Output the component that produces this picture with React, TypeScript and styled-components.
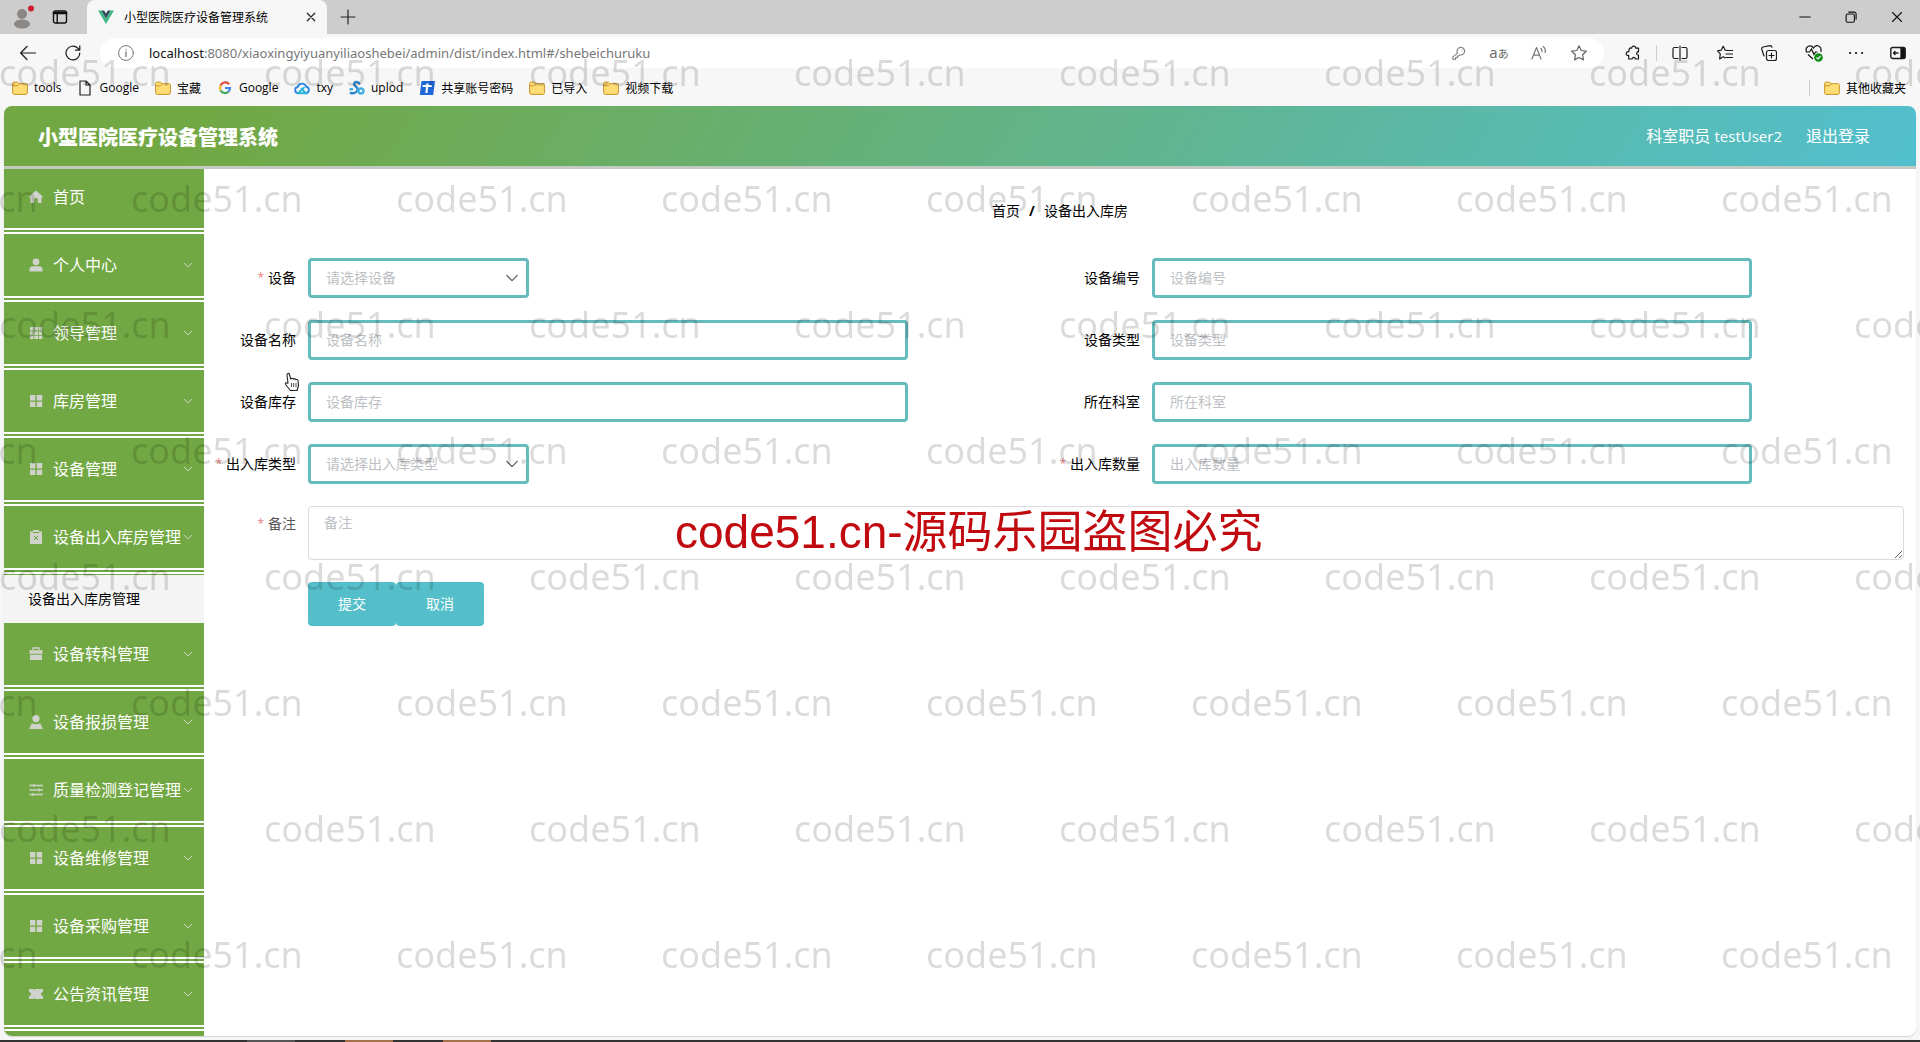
import React from 'react';
import styled, { createGlobalStyle } from 'styled-components';

const GlobalStyle = createGlobalStyle`
  *, *::before, *::after { box-sizing: border-box; }
  body {
    margin: 0;
    background: #f6f6f6;
    font-family: "Open Sans", "Noto Sans", "Noto Sans CJK SC", sans-serif;
    font-size: 14px;
    color: #000;
  }
  button, input, select, textarea { font: inherit; }
  a { color: inherit; text-decoration: none; }
`;

const green = '#72a843';
const teal = '#54bfca';
const fieldBorder = '#66bbbd';

/* ---------- browser frame ---------- */

const Window = styled.div`
  display: flex;
  flex-direction: column;
  min-height: 100vh;
  overflow: hidden;
`;

const TabStrip = styled.div`
  display: flex;
  align-items: center;
  height: 34px;
  background: #cdcdcd;
`;

const StripButton = styled.button<{ $w: number }>`
  display: grid;
  place-items: center;
  width: ${(p) => p.$w}px;
  height: 34px;
  padding: 0;
  border: 0;
  background: none;
`;

const StripStart = styled.div`
  display: flex;
  padding: 0 8px 0 2px;
`;

const Tab = styled.div`
  display: flex;
  align-items: center;
  gap: 10px;
  width: 240px;
  height: 34px;
  padding: 0 0 0 11px;
  border-radius: 8px 8px 0 0;
  background: #f7f7f7;
  font-size: 12px;
`;

const TabTitle = styled.span`
  flex: 1;
  white-space: nowrap;
`;

const WindowButtons = styled.div`
  display: flex;
  margin-left: auto;
`;

const Toolbar = styled.div`
  display: flex;
  align-items: center;
  height: 38px;
  background: #f7f7f7;
`;

const ToolButton = styled.button<{ $w: number }>`
  display: grid;
  place-items: center;
  width: ${(p) => p.$w}px;
  height: 30px;
  padding: 0;
  border: 0;
  background: none;
  color: #1b1b1b;
`;

const TranslateMark = styled.span`
  color: #666;
  font-size: 15px;
  line-height: 16px;

  small { font-size: 11px; }
`;

const NavButtons = styled.div`
  display: flex;
  padding: 0 6px 0 5px;
`;

const AddressBar = styled.div`
  display: flex;
  flex: 1;
  align-items: center;
  height: 30px;
  padding: 0 5px 0 18px;
  border-radius: 15px;
  background: #fff;
  color: #777;
`;

const Url = styled.span`
  flex: 1;
  padding-left: 15px;
  font-family: "Noto Sans", "Open Sans", sans-serif;
  font-size: 13px;
  white-space: nowrap;

  b { font-weight: 400; color: #111; }
`;

const Divider = styled.span`
  width: 1px;
  height: 16px;
  background: #cfcfcf;
`;

const ToolEnd = styled.div`
  display: flex;
  align-items: center;
  padding-left: 6px;
`;

const Bookmarks = styled.nav`
  display: flex;
  align-items: center;
  gap: 16px;
  height: 34px;
  padding: 0 14px 3px 12px;
  background: #f7f7f7;
  font-size: 12px;
  white-space: nowrap;
`;

const Bookmark = styled.a`
  display: flex;
  align-items: center;
  gap: 6px;
`;

const BookmarkEnd = styled.div`
  display: flex;
  align-items: center;
  gap: 14px;
  margin-left: auto;
`;

/* ---------- application ---------- */

const Page = styled.div`
  display: flex;
  flex: 1;
  flex-direction: column;
  margin: 0 4px 4px;
  overflow: hidden;
  border-radius: 8px;
  background: #fff;
  box-shadow: 0 1px 1px #d4d4d4;
`;

const Header = styled.header`
  display: flex;
  z-index: 1;
  align-items: center;
  justify-content: space-between;
  height: 60px;
  padding: 0 46px 0 34px;
  background: linear-gradient(120deg, ${green} 10%, #52bfce 100%);
  box-shadow: 0 3px 0 #c2cac2;
  color: #fff;
`;

const Title = styled.h1`
  margin: 0;
  font-size: 20px;
  font-weight: 900;
`;

const Account = styled.div`
  display: flex;
  align-items: center;
  gap: 24px;
  padding-bottom: 2px;
  font-size: 16px;
`;

const UserName = styled.span`
  font-size: 15px;
`;

const Body = styled.div`
  display: flex;
  flex: 1;
`;

const Sidebar = styled.nav`
  flex: none;
  width: 200px;
  background: ${green};
`;

const MenuItem = styled.a`
  display: flex;
  align-items: center;
  height: 68px;
  padding: 0 11px 0 24px;
  border-bottom: 6px double #fff;
  background: ${green};
  color: #fff;
  font-size: 16px;
  white-space: nowrap;
`;

const MenuText = styled.span`
  flex: 1;
  padding: 0 0 2px 9px;
`;

const SubItem = styled.a`
  display: flex;
  align-items: center;
  height: 49px;
  padding: 0 0 2px 24px;
  border-top: 1px solid ${green};
  background: #f4f4f4;
`;

const Main = styled.main`
  flex: 1;
  min-width: 0;
  padding: 32px 12px;
`;

const Breadcrumb = styled.div`
  display: flex;
  justify-content: center;
  gap: 9px;
  height: 60px;
  line-height: 26px;
`;

const Form = styled.form`
  display: grid;
  grid-template-columns: 1fr 1fr;
  row-gap: 22px;
`;

const Field = styled.div<{ $wide?: boolean }>`
  display: flex;
  grid-column: ${(p) => (p.$wide ? '1 / -1' : 'auto')};
`;

const Label = styled.label<{ $muted?: boolean }>`
  display: flex;
  flex: none;
  justify-content: flex-end;
  gap: 4px;
  width: 92px;
  padding-right: 12px;
  color: ${(p) => (p.$muted ? '#555' : '#000')};
  line-height: ${(p) => (p.$muted ? 36 : 39)}px;
  white-space: nowrap;
`;

const Required = styled.span`
  color: #e98080;
  font-size: 12px;
`;

const TextInput = styled.input`
  width: 600px;
  max-width: 80%;
  height: 40px;
  padding: 0 15px 2px;
  border: 3px solid ${fieldBorder};
  border-radius: 4px;
  outline: 0;
  background: #fff;

  &::placeholder { color: #bdbfc4; opacity: 1; }
`;

const SelectBox = styled.div`
  display: grid;
  width: 221px;
  align-items: center;

  > * { grid-area: 1 / 1; }
  > svg { justify-self: end; margin-right: 10px; pointer-events: none; }
`;

const Select = styled.select`
  width: 100%;
  height: 40px;
  padding: 0 15px 2px;
  border: 3px solid ${fieldBorder};
  border-radius: 4px;
  outline: 0;
  appearance: none;
  background: #fff;
  color: #bdbfc4;
`;

const TextArea = styled.textarea`
  flex: 1;
  height: 54px;
  padding: 5px 15px;
  border: 1px solid #d9dadd;
  border-radius: 4px;
  line-height: 22px;
  resize: vertical;

  &::placeholder { color: #bdbfc4; opacity: 1; }
`;

const Actions = styled.div`
  display: flex;
  grid-column: 1 / -1;
  padding-left: 92px;
`;

const ActionButton = styled.button`
  width: 88px;
  height: 44px;
  padding: 0 0 2px;
  border: 0;
  border-radius: 4px;
  background: ${teal};
  color: #fff;
`;

/* ---------- desktop strip and overlays ---------- */

const Taskbar = styled.div`
  display: flex;
  gap: 50px;
  height: 2px;
  padding-left: 247px;
  background: #333;
`;

const TaskMark = styled.span<{ $c: string }>`
  width: 48px;
  background: ${(p) => p.$c};
`;

const Overlay = styled.div`
  position: fixed;
  inset: 0;
  z-index: 5;
  overflow: hidden;
  padding-top: 10px;
  pointer-events: none;
`;

const MarkRow = styled.div<{ $shift: boolean }>`
  display: flex;
  margin-left: ${(p) => (p.$shift ? -134 : -1)}px;
  color: rgba(0, 0, 0, 0.14);
  font-family: "Noto Sans", "Open Sans", sans-serif;
  font-size: 36px;
  line-height: 126px;

  span { flex: none; width: 265px; }
`;

const Notice = styled.div`
  position: fixed;
  top: 500px;
  left: 675px;
  z-index: 6;
  color: #c00a0f;
  font-family: "Liberation Sans", "Noto Sans CJK SC", sans-serif;
  font-size: 45px;
  line-height: 64px;
  white-space: nowrap;
  pointer-events: none;
`;

const NoticeSite = styled.span`
  font-size: 46px;
`;

const Pointer = styled.svg`
  position: fixed;
  top: 372px;
  left: 284px;
  z-index: 7;
  pointer-events: none;
`;

/* ---------- icons ---------- */

const Line = ({ size = 16, children, w = 1.2, color = 'currentColor' }: any) => (
  <svg width={size} height={size} viewBox="0 0 16 16" fill="none" stroke={color} strokeWidth={w} strokeLinecap="round" strokeLinejoin="round">
    {children}
  </svg>
);

const Folder = () => (
  <svg width="16" height="16" viewBox="0 0 16 16">
    <path d="M.6 3.6c0-.9.6-1.5 1.5-1.5h3.3l1.6 1.6h6.9c.9 0 1.5.6 1.5 1.5v7.7c0 .9-.6 1.5-1.5 1.5H2.1c-.9 0-1.5-.6-1.5-1.5z" fill="#ffdd76" stroke="#c8942a" />
    <path d="M.8 5.8h4.6L7 4" fill="none" stroke="#c8942a" />
  </svg>
);

const FileIcon = () => (
  <Line color="#222"><path d="M3 1h6l4 4v10H3zM9 1v4h4" /></Line>
);

const GoogleIcon = () => (
  <svg width="16" height="16" viewBox="0 0 16 16" fill="none" strokeWidth="2.2">
    <path d="M12.1 4.2A5 5 0 0 0 3.6 5.6" stroke="#e2493b" />
    <path d="M3.6 5.6a5 5 0 0 0 0 4.8" stroke="#f3b626" />
    <path d="M3.6 10.4a5 5 0 0 0 7.8 1.3" stroke="#3aa757" />
    <path d="M11.4 11.7A5 5 0 0 0 13 8H8" stroke="#4383ee" />
  </svg>
);

const CloudIcon = () => (
  <svg width="16" height="16" viewBox="0 0 16 16" fill="none" strokeWidth="1.9" strokeLinecap="round">
    <path d="M4 13.2a3.2 3.2 0 0 1-.3-6.3 4.5 4.5 0 0 1 8.6-.2 3.3 3.3 0 0 1-.3 6.5" stroke="#2b83e6" />
    <path d="M4 13.2h8L7.4 8.8M4.2 13 10 7.6" stroke="#27b5d8" />
  </svg>
);

const UplodIcon = () => (
  <svg width="16" height="16" viewBox="0 0 16 16" fill="none" strokeWidth="2.4" strokeLinecap="round">
    <path d="M10.2 3.4C8.5 1 5 1.8 5.2 4.3c.2 2.2 3.8 2.4 3.4 5.4-.4 3-4 4-6.8 3.3" stroke="#2f86c8" />
    <circle cx="12" cy="11" r="2.5" stroke="#45b3e0" />
    <path d="M1.6 9.2h1.4" stroke="#45b3e0" />
  </svg>
);

const ShareIcon = () => (
  <svg width="16" height="16" viewBox="0 0 16 16">
    <path d="M2.5 1H16l-1.8 14H.8z" fill="#1f66d8" />
    <path d="M3.6 6h9.2M8.4 3.5 7.4 13" stroke="#fff" strokeWidth="2.2" fill="none" />
  </svg>
);

const VueIcon = () => (
  <svg width="16" height="16" viewBox="0 0 16 16">
    <path d="M0 1.5h3.4L8 9.4l4.6-7.9H16L8 15z" fill="#41b883" />
    <path d="M3.4 1.5h2.8L8 4.5l1.8-3h2.8L8 9.4z" fill="#35495e" />
  </svg>
);

const ProfileIcon = () => (
  <svg width="24" height="26" viewBox="0 0 24 26">
    <circle cx="12" cy="10" r="5" fill="#8b8785" />
    <ellipse cx="12" cy="20" rx="8" ry="4.5" fill="#8b8785" />
    <circle cx="21" cy="4.5" r="3" fill="#cb1f31" />
  </svg>
);

const menuShapes: Record<string, React.ReactNode> = {
  home: <path d="M8 1.5 1.5 7.3v1.2H2.5V14h3.7v-3.5a1.8 1.8 0 0 1 3.6 0V14h3.7V8.5h1V7.3z" />,
  user: <><circle cx="8" cy="4.8" r="3.4" /><path d="M1.5 14.5v-2c0-2 1.5-3.2 3.5-3.2h6c2 0 3.5 1.2 3.5 3.2v2z" /></>,
  menu: <path d="M2 2h3.6v3.6H2zM6.4 2H10v3.6H6.4zM10.8 2h3.4v3.6h-3.4zM2 6.4h3.6V10H2zM6.4 6.4H10V10H6.4zM10.8 6.4h3.4V10h-3.4zM2 10.8h3.6v3.2H2zM6.4 10.8H10v3.2H6.4zM10.8 10.8h3.4v3.2h-3.4z" />,
  grid: <path d="M2 2h5.4v5.4H2zM8.8 2h5.4v5.4H8.8zM2 8.8h5.4V14H2zM8.8 8.8h5.4V14H8.8z" />,
  clip: <><path d="M2 2.5h3V1h6v1.5h3V15H2z" /><path d="m6 7 4 4m0-4-4 4M5 3.5h6" stroke={green} strokeWidth="1" /></>,
  bag: <><path d="M5 4V2h6v2" fill="none" stroke="#cfd3cb" strokeWidth="1.3" /><path d="M1.5 4.2h13v3.6h-13zM2 8.7h12V14H2z" /></>,
  person: <><circle cx="8" cy="4.6" r="3.6" /><path d="M1 15 3.8 9.2c2.6 1.5 5.8 1.5 8.4 0L15 15z" /></>,
  sliders: <path d="M1.5 3.5H15M1.5 8H15M1.5 12.5H15M6 2v3M11 6.5v3M5 11v3" fill="none" stroke="#cfd3cb" strokeWidth="1.3" />,
  ticket: <path d="M1 3h4.5l1 1 1-1H15v3a2 2 0 0 0 0 4v3H7.5l-1-1-1 1H1v-3a2 2 0 0 0 0-4z" />,
};

const MenuIcon = ({ name }: { name: string }) => (
  <svg width="16" height="16" viewBox="0 0 16 16" fill="#cfd3cb">{menuShapes[name]}</svg>
);

const Chevron = ({ size, color }: { size: number; color: string }) => (
  <Line size={size} color={color} w={size > 10 ? 1.3 : 1.6}><path d="m2 5 6 6 6-6" /></Line>
);

/* ---------- data ---------- */

const bookmarks: [React.ReactNode, string][] = [
  [<Folder />, 'tools'],
  [<FileIcon />, 'Google'],
  [<Folder />, '宝藏'],
  [<GoogleIcon />, 'Google'],
  [<CloudIcon />, 'txy'],
  [<UplodIcon />, 'uplod'],
  [<ShareIcon />, '共享账号密码'],
  [<Folder />, '已导入'],
  [<Folder />, '视频下载'],
];

const menu: { icon: string; text: string; leaf?: boolean; child?: string }[] = [
  { icon: 'home', text: '首页', leaf: true },
  { icon: 'user', text: '个人中心' },
  { icon: 'menu', text: '领导管理' },
  { icon: 'grid', text: '库房管理' },
  { icon: 'grid', text: '设备管理' },
  { icon: 'clip', text: '设备出入库房管理', child: '设备出入库房管理' },
  { icon: 'bag', text: '设备转科管理' },
  { icon: 'person', text: '设备报损管理' },
  { icon: 'sliders', text: '质量检测登记管理' },
  { icon: 'grid', text: '设备维修管理' },
  { icon: 'grid', text: '设备采购管理' },
  { icon: 'ticket', text: '公告资讯管理' },
];

const fields: { id: string; label: string; required?: boolean; choose?: boolean }[] = [
  { id: 'shebei', label: '设备', required: true, choose: true },
  { id: 'bianhao', label: '设备编号' },
  { id: 'mingcheng', label: '设备名称' },
  { id: 'leixing', label: '设备类型' },
  { id: 'kucun', label: '设备库存' },
  { id: 'keshi', label: '所在科室' },
  { id: 'churuku', label: '出入库类型', required: true, choose: true },
  { id: 'shuliang', label: '出入库数量', required: true },
];

const BrowserFrame = () => (
  <>
    <TabStrip>
      <StripStart>
        <StripButton $w={39} aria-label="profile"><ProfileIcon /></StripButton>
        <StripButton $w={38} aria-label="tab actions">
          <Line color="#111" w={1.4}><rect x="1.5" y="2" width="13" height="12" rx="2" /><path d="M2 4h12" strokeWidth="2.6" /><path d="M5.2 4v10" /></Line>
        </StripButton>
      </StripStart>
      <Tab>
        <VueIcon />
        <TabTitle>小型医院医疗设备管理系统</TabTitle>
        <StripButton $w={32} aria-label="close tab"><Line size={12} color="#222" w={1.6}><path d="m3 3 10 10M13 3 3 13" /></Line></StripButton>
      </Tab>
      <StripButton $w={42} aria-label="new tab"><Line color="#222"><path d="M8 1v14M1 8h14" /></Line></StripButton>
      <WindowButtons>
        <StripButton $w={46} aria-label="minimize"><Line size={12} color="#111" w={1.5}><path d="M1 8h14" /></Line></StripButton>
        <StripButton $w={46} aria-label="restore"><Line size={12} color="#111" w={1.5}><rect x="1.5" y="4" width="11" height="11" rx="2" /><path d="M5 1.5h7A2.5 2.5 0 0 1 14.8 4v7" /></Line></StripButton>
        <StripButton $w={46} aria-label="close"><Line size={12} color="#111" w={1.5}><path d="m2 2 12 12M14 2 2 14" /></Line></StripButton>
      </WindowButtons>
    </TabStrip>
    <Toolbar>
      <NavButtons>
        <ToolButton $w={46} aria-label="back"><Line><path d="M15.5 8H.8M7 1.5.6 8 7 14.5" /></Line></ToolButton>
        <ToolButton $w={43} aria-label="reload"><Line><path d="M14.8 8a6.9 6.9 0 1 1-2.2-5l2 1.9M14.8.8v4.3h-4.3" /></Line></ToolButton>
      </NavButtons>
      <AddressBar>
        <Line w={1}><circle cx="8" cy="8" r="7.4" /><path d="M8 7v4.5M8 4.6v.2" strokeWidth="1.3" /></Line>
        <Url><b>localhost</b>:8080/xiaoxingyiyuanyiliaoshebei/admin/dist/index.html#/shebeichuruku</Url>
        <ToolButton $w={40} aria-label="passwords"><Line size={14} color="#777"><path d="M6.3 8.2A4.4 4.4 0 1 1 9 10.2L7.8 11.4H6v2H4v1.8H1v-2.8zM11.5 4.5h.1" /></Line></ToolButton>
        <ToolButton $w={40} aria-label="translate"><TranslateMark>a<small>あ</small></TranslateMark></ToolButton>
        <ToolButton $w={40} aria-label="read aloud"><Line color="#777"><path d="m1 14 4.5-11.5L10 14M2.6 10.2h5.8M10 3.5c1 1 1.2 2.2.8 3.2M12.2 1.5c2 1.6 2.6 4 1.8 6" /></Line></ToolButton>
        <ToolButton $w={40} aria-label="favorite"><Line color="#666"><path d="m8 .8 2.2 4.7 5.1.7-3.7 3.6.9 5.1L8 12.5l-4.5 2.4.9-5.1L.7 6.2l5.1-.7z" /></Line></ToolButton>
      </AddressBar>
      <ToolEnd>
        <ToolButton $w={46} aria-label="extensions"><Line><path d="M4.5 3.2h2.200a2 2 0 0 1 4 0h2.800v3.600h-.7a1.700 1.700 0 0 0 0 3.200h.7v4h-3.200a1.600 1.600 0 0 0-3.200 0H3.700v-3.600a1.900 1.900 0 1 1 0-3.600z" /></Line></ToolButton>
        <Divider />
        <ToolButton $w={46} aria-label="split screen"><Line><path d="M6 2.5H2.5Q1 2.5 1 4v8q0 1.5 1.5 1.5H6M10 2.5h3.5Q15 2.5 15 4v8q0 1.5-1.5 1.5H10M8 1v14" /></Line></ToolButton>
        <ToolButton $w={44} aria-label="favorites"><Line><path d="M10.5 5.5 8.2 5.2 6.2 1.2 4.2 5.2.5 5.9 3.3 8.8l-.7 5.2L6.2 11.8M10.5 5.5H15.5M9 9h6.500M9 12.500h6.500M6.200 11.800 8 12.800" /></Line></ToolButton>
        <ToolButton $w={44} aria-label="collections"><Line><rect x="5.5" y="5.5" width="10" height="10" rx="2" /><path d="M10.5 8v5M8 10.5h5M3 11 .8 4.2Q.5 2.5 2 2l7-1.4q1.5 0 2 1.6" /></Line></ToolButton>
        <ToolButton $w={45} aria-label="browser essentials">
          <svg width="18" height="18" viewBox="0 0 18 18" fill="none" stroke="#111" strokeWidth="1.2">
            <path d="M1.5 8C-.5 2 6 0 8.5 4 11-.5 17.5 2 15.8 8M1 8h3.5L6.5 5l2.5 5.5L10.500 8h2M3 10.500 8 15" />
            <circle cx="13.5" cy="13.5" r="4.3" fill="#128a17" stroke="none" /><path d="m11.5 13.5 1.5 1.5 2.6-2.8" stroke="#fff" />
          </svg>
        </ToolButton>
        <ToolButton $w={40} aria-label="more"><Line><path d="M2 8h.1M8 8h.1M14 8h.1" strokeWidth="2.2" /></Line></ToolButton>
        <ToolButton $w={44} aria-label="sidebar"><Line w={1.4}><rect x=".8" y="2.5" width="14.4" height="11" rx="2" /><path d="M11 3h3.5v10H11z" fill="#111" /><path d="M8 8H3.5M5 6.5 3.5 8 5 9.5" /></Line></ToolButton>
      </ToolEnd>
    </Toolbar>
    <Bookmarks>
      {bookmarks.map(([icon, text], i) => (
        <Bookmark href="#" key={i}>{icon}{text}</Bookmark>
      ))}
      <BookmarkEnd><Divider /><Bookmark href="#"><Folder />其他收藏夹</Bookmark></BookmarkEnd>
    </Bookmarks>
  </>
);

export default function App() {
  return (
    <Window>
      <GlobalStyle />
      <BrowserFrame />
      <Page>
        <Header>
          <Title>小型医院医疗设备管理系统</Title>
          <Account><span>科室职员 <UserName>testUser2</UserName></span><a href="#logout">退出登录</a></Account>
        </Header>
        <Body>
          <Sidebar>
            {menu.map((m) => (
              <React.Fragment key={m.text}>
                <MenuItem href="#">
                  <MenuIcon name={m.icon} />
                  <MenuText>{m.text}</MenuText>
                  {!m.leaf && <Chevron size={10} color="#cfdcc3" />}
                </MenuItem>
                {m.child && <SubItem href="#">{m.child}</SubItem>}
              </React.Fragment>
            ))}
          </Sidebar>
          <Main>
            <Breadcrumb><a href="#">首页</a><b>/</b><span>设备出入库房</span></Breadcrumb>
            <Form onSubmit={(e) => e.preventDefault()}>
              {fields.map((f) => (
                <Field key={f.id}>
                  <Label htmlFor={f.id}>{f.required && <Required>*</Required>}{f.label}</Label>
                  {f.choose ? (
                    <SelectBox>
                      <Select id={f.id}><option>{`请选择${f.label}`}</option></Select>
                      <Chevron size={14} color="#555" />
                    </SelectBox>
                  ) : (
                    <TextInput id={f.id} placeholder={f.label} />
                  )}
                </Field>
              ))}
              <Field $wide>
                <Label htmlFor="beizhu" $muted><Required>*</Required>备注</Label>
                <TextArea id="beizhu" placeholder="备注" />
              </Field>
              <Actions>
                <ActionButton type="submit">提交</ActionButton>
                <ActionButton type="button">取消</ActionButton>
              </Actions>
            </Form>
          </Main>
        </Body>
      </Page>
      <Taskbar><TaskMark $c="#565656" /><TaskMark $c="#a5714a" /><TaskMark $c="#a5714a" /></Taskbar>
      <Overlay>
        {Array.from({ length: 8 }, (_, r) => (
          <MarkRow key={r} $shift={r % 2 === 1}>
            {Array.from({ length: 8 }, (_, c) => <span key={c}>code51.cn</span>)}
          </MarkRow>
        ))}
      </Overlay>
      <Notice><NoticeSite>code51.cn-</NoticeSite>源码乐园盗图必究</Notice>
      <Pointer width="16" height="20" viewBox="0 0 16 20" fill="#fff" stroke="#222" strokeWidth="1.1" strokeLinejoin="round">
        <path d="M4 11 3 3.2C2.8 1.2 5 .8 5.5 2.5L6.8 7c.5-1.2 2.2-1 2.5.2.7-1 2.2-.6 2.4.6.8-.7 2.2-.2 2.3 1l.5 4.7-1.500 5H6.500L1.500 12.500c-.8-1.300.8-2.500 2-1.200z" />
        <path d="M7.5 11v4M9.7 11v4M12 11v4" strokeWidth=".8" />
      </Pointer>
    </Window>
  );
}
